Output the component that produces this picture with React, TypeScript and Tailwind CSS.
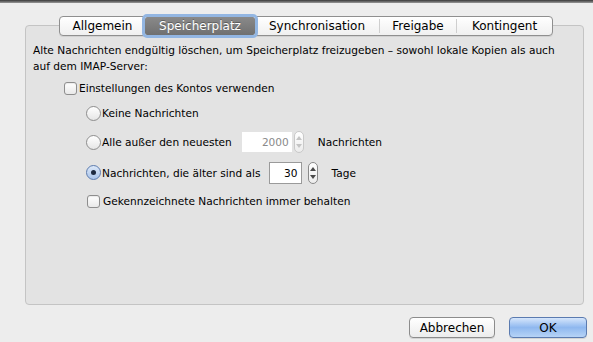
const font = { fontFamily: '"DejaVu Sans", "Liberation Sans", sans-serif' };

const tabs = [
  { label: "Allgemein", w: "w-[85px]" },
  { label: "Speicherplatz", w: "w-[110px]" },
  { label: "Synchronisation", w: "w-[124px]" },
  { label: "Freigabe", w: "w-[76px]" },
  { label: "Kontingent", w: "w-[95px]" },
];

function Checkbox() {
  return (
    <span className="inline-block w-[13px] h-[13px] rounded-[3px] border border-[#8e8e8e] bg-gradient-to-b from-white to-[#e9e9e9] shadow-[inset_0_1px_1px_rgba(0,0,0,0.08)]" />
  );
}

function Radio({ checked }: { checked?: boolean }) {
  return (
    <span
      className={
        "relative inline-flex items-center justify-center w-[15px] h-[15px] rounded-full border " +
        (checked
          ? "border-[#5c7bae] bg-gradient-to-b from-[#dce8f8] to-[#aac4ea]"
          : "border-[#8e8e8e] bg-gradient-to-b from-white to-[#e6e6e6]")
      }
    >
      {checked && <span className="w-[5px] h-[5px] rounded-full bg-[#1d2a40]" />}
    </span>
  );
}

function Stepper({ disabled }: { disabled?: boolean }) {
  const c = disabled ? "#c4c4c4" : "#4a4a4a";
  return (
    <span
      className={
        "flex flex-col items-center justify-center w-[10px] h-[22px] rounded-[5px] border bg-gradient-to-b from-white to-[#ececec] " +
        (disabled ? "border-[#c9c9c9]" : "border-[#8a8a8a]")
      }
    >
      <svg width="6" height="4" viewBox="0 0 6 4">
        <path d="M3 0 L6 4 L0 4 Z" fill={c} />
      </svg>
      <span className="h-[4px]" />
      <svg width="6" height="4" viewBox="0 0 6 4">
        <path d="M0 0 L6 0 L3 4 Z" fill={c} />
      </svg>
    </span>
  );
}

export default function App() {
  return (
    <div className="w-[593px] h-[342px] bg-[#ededed] flex flex-col text-[10.6px] text-black overflow-hidden" style={font}>
      <div className="h-[3px] bg-gradient-to-b from-[#3a3a3a] to-[#9a9a9a]" />
      <div className="relative mt-[22px] ml-[25px] w-[559px] h-[280px] rounded-[4px] border border-[#c4c4c4] bg-[#e3e3e3]">
        <div className="absolute left-[33px] -top-[10px] flex items-center h-[20px] rounded-[4px] border border-[#8f8f8f] bg-gradient-to-b from-white to-[#f0f0f0] shadow-[0_1px_0_rgba(0,0,0,0.08)]">
          {tabs.map((t, i) => {
            const sel = t.label === "Speicherplatz";
            const sep = i > 2;
            return (
              <div key={t.label} className="flex items-center h-full">
                {sep && <span className="w-px h-[14px] bg-[#cfcfcf]" />}
                <span
                  className={
                    t.w +
                    " h-full flex items-center justify-center text-[12px] " +
                    (sel
                      ? "bg-gradient-to-b from-[#8a8a8a] to-[#707070] text-white outline-[3px] outline outline-[#93b6e2] rounded-[2px]"
                      : "text-black")
                  }
                  style={sel ? { textShadow: "0 -1px 0 rgba(0,0,0,0.3)" } : undefined}
                >
                  {t.label}
                </span>
              </div>
            );
          })}
        </div>

        <div className="pl-[7px] pt-[16px] pr-[8px] leading-[16px]">
          <p>
            Alte Nachrichten endgültig löschen, um Speicherplatz freizugeben – sowohl lokale Kopien als auch
            <br />
            auf dem IMAP-Server:
          </p>

          <div className="mt-[6px] ml-[31px] flex items-center gap-[2px]">
            <Checkbox />
            <span>Einstellungen des Kontos verwenden</span>
          </div>

          <div className="ml-[53px] flex flex-col">
            <div className="mt-[9px] flex items-center gap-[1px] h-[16px]">
              <Radio />
              <span>Keine Nachrichten</span>
            </div>
            <div className="mt-[10px] flex items-center h-[22px]">
              <Radio />
              <span className="ml-[1px]">Alle außer den neuesten</span>
              <span className="ml-[10px] w-[50px] h-[20px] bg-white flex items-center justify-end pr-[3px] text-[#8a8a8a]">
                2000
              </span>
              <span className="ml-[2px]">
                <Stepper disabled />
              </span>
              <span className="ml-[14px]">Nachrichten</span>
            </div>
            <div className="mt-[8px] flex items-center h-[23px]">
              <Radio checked />
              <span className="ml-[1px]">Nachrichten, die älter sind als</span>
              <span className="ml-[8px] w-[33px] h-[22px] bg-white border border-[#9a9a9a] flex items-center justify-end pr-[3px]">
                30
              </span>
              <span className="ml-[6px]">
                <Stepper />
              </span>
              <span className="ml-[14px]">Tage</span>
            </div>
            <div className="mt-[9px] flex items-center gap-[3px] ml-[1px]">
              <Checkbox />
              <span>Gekennzeichnete Nachrichten immer behalten</span>
            </div>
          </div>
        </div>
      </div>

      <div className="flex justify-end gap-[14px] pr-[6px] mt-[12px]">
        <button className="w-[86px] h-[21px] rounded-[4px] border border-[#8c8c8c] bg-gradient-to-b from-white to-[#ececec] text-[12px] shadow-[0_1px_0_rgba(0,0,0,0.1)]">
          Abbrechen
        </button>
        <button className="w-[78px] h-[21px] rounded-[4px] border border-[#5b7bb0] bg-gradient-to-b from-[#d6e6fb] via-[#8fb8ef] to-[#b6d3f6] text-[12px] shadow-[0_1px_0_rgba(0,0,0,0.1)]">
          OK
        </button>
      </div>
    </div>
  );
}
